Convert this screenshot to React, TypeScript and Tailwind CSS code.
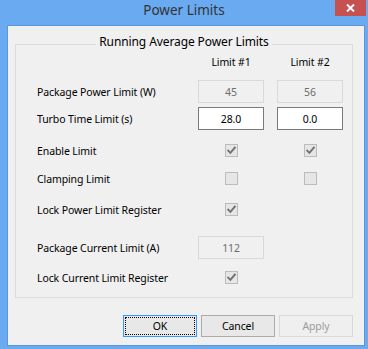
import React from "react";

function Check({ checked }: { checked?: boolean }) {
  return (
    <div className="w-[13px] h-[13px] border border-[#bcbcbc] bg-[#e6e6e6] flex items-center justify-center">
      {checked && (
        <svg width="9" height="9" viewBox="0 0 9 9">
          <path d="M1.2 4.6 L3.4 6.9 L7.8 1.6" stroke="#727272" strokeWidth="1.9" fill="none" strokeLinecap="square" />
        </svg>
      )}
    </div>
  );
}

function Box({ value, disabled }: { value: string; disabled?: boolean }) {
  return (
    <div
      className={
        disabled
          ? "w-[66px] h-[23px] border border-[#d9d9d9] bg-[#f0f0f0] text-[#6d6d6d] flex items-center justify-center"
          : "w-[66px] h-[23px] border border-[#7a7a7a] bg-white text-black flex items-center justify-center"
      }
    >
      {value}
    </div>
  );
}

function Row({
  label,
  a,
  b,
  h,
  mt,
}: {
  label?: string;
  a?: React.ReactNode;
  b?: React.ReactNode;
  h: string;
  mt: string;
}) {
  return (
    <div className={`grid grid-cols-[148px_66px_66px] gap-x-[13px] items-center pl-[21px] ${h} ${mt}`}>
      <div className="text-black whitespace-nowrap">{label}</div>
      <div className="flex justify-center">{a}</div>
      <div className="flex justify-center">{b}</div>
    </div>
  );
}

export default function App() {
  return (
    <div className="w-[368px] h-[349px] bg-[#6aaaf1] flex flex-col font-['Noto_Sans',sans-serif] text-[10.5px] tracking-[-0.1px] leading-[16px]">
      <div className="h-[25px] flex items-start shrink-0">
        <div className="w-[33px]" />
        <div className="flex-1 text-center text-[13.5px] leading-[20px] tracking-normal text-[#333]">Power Limits</div>
        <div className="w-[31px] h-[16px] bg-[#c75050] mr-[2px] flex items-center justify-center">
          <svg width="9" height="8" viewBox="0 0 9 8">
            <path d="M1 0.5 L8 7.5 M8 0.5 L1 7.5" stroke="white" strokeWidth="2" />
          </svg>
        </div>
      </div>
      <div className="flex-1 ml-[7px] mr-[3px] mb-[3px] border border-[#5b97dd] bg-[#f0f0f0] flex flex-col">
        <div className="w-[338px] h-[254px] ml-[7px] mt-[18px] border border-[#dcdcdc] flex flex-col">
          <div className="self-center -mt-[12px] h-[18px] leading-[18px] px-[3px] bg-[#f0f0f0] text-black text-[12px]">
            Running Average Power Limits
          </div>
          <Row h="h-[16px]" mt="mt-[3px]" a={<span>Limit #1</span>} b={<span>Limit #2</span>} />
          <Row h="h-[23px]" mt="mt-[10px]" label="Package Power Limit (W)" a={<Box value="45" disabled />} b={<Box value="56" disabled />} />
          <Row h="h-[23px]" mt="mt-[4px]" label="Turbo Time Limit (s)" a={<Box value="28.0" />} b={<Box value="0.0" />} />
          <Row h="h-[23px]" mt="mt-[9px]" label="Enable Limit" a={<Check checked />} b={<Check checked />} />
          <Row h="h-[23px]" mt="mt-[5px]" label="Clamping Limit" a={<Check />} b={<Check />} />
          <Row h="h-[23px]" mt="mt-[8px]" label="Lock Power Limit Register" a={<Check checked />} />
          <Row h="h-[23px]" mt="mt-[15px]" label="Package Current Limit (A)" a={<Box value="112" disabled />} />
          <Row h="h-[23px]" mt="mt-[7px]" label="Lock Current Limit Register" a={<Check checked />} />
        </div>
        <div className="w-[338px] ml-[7px] mt-[17px] flex justify-end gap-[4px]">
          <div className="w-[74px] h-[22px] border border-[#3399ff] bg-[#e8e8e8] flex">
            <div className="flex-1 m-[1px] border border-dotted border-black flex items-center justify-center text-black">OK</div>
          </div>
          <div className="w-[74px] h-[22px] border border-[#acacac] bg-[#e8e8e8] flex items-center justify-center text-black">Cancel</div>
          <div className="w-[74px] h-[22px] border border-[#d9d9d9] bg-[#efefef] flex items-center justify-center text-[#9d9d9d]">Apply</div>
        </div>
      </div>
    </div>
  );
}
